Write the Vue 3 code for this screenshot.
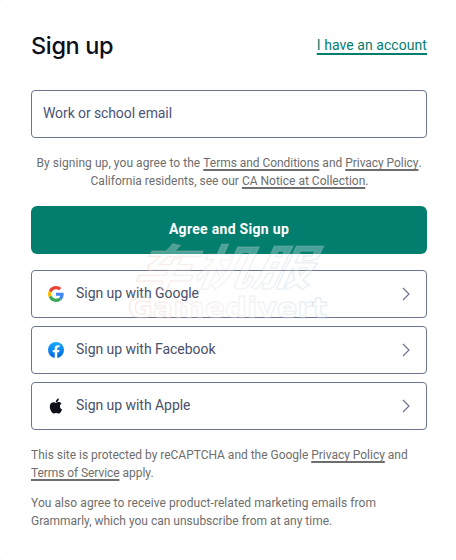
<template>
  <main class="signup">
    <header class="signup-head">
      <h1 class="title">Sign up</h1>
      <a class="account-link" href="#">I have an account</a>
    </header>

    <input class="email" type="email" placeholder="Work or school email" />

    <p class="terms">
      <span class="terms-intro">By signing up, you agree to the </span><a class="terms-link" href="#">Terms and Conditions</a> and <a class="terms-link" href="#">Privacy Policy</a>.<br />
      <span class="terms-region">California residents, see our </span><a href="#">CA Notice at Collection</a>.
    </p>

    <button class="submit" type="button">Agree and Sign up</button>

    <div class="providers">
      <button v-for="item in providers" :key="item.id" class="provider" type="button">
        <svg v-if="item.id === 'google'" class="provider-icon" viewBox="0 0 48 48">
          <path fill="#ea4335" d="M24 9.5c3.54 0 6.71 1.22 9.21 3.6l6.85-6.85C35.9 2.38 30.47 0 24 0 14.62 0 6.51 5.38 2.56 13.22l7.98 6.19C12.43 13.72 17.74 9.5 24 9.5z" />
          <path fill="#4285f4" d="M46.98 24.55c0-1.57-.15-3.09-.38-4.55H24v9.02h12.94c-.58 2.96-2.26 5.48-4.78 7.18l7.73 6c4.51-4.18 7.09-10.36 7.09-17.65z" />
          <path fill="#fbbc05" d="M10.53 28.59c-.48-1.45-.76-2.99-.76-4.59s.27-3.14.76-4.59l-7.98-6.19C.92 16.46 0 20.12 0 24c0 3.88.92 7.54 2.56 10.78l7.97-6.19z" />
          <path fill="#34a853" d="M24 48c6.48 0 11.93-2.13 15.89-5.81l-7.73-6c-2.15 1.45-4.92 2.3-8.16 2.3-6.26 0-11.57-4.22-13.47-9.91l-7.98 6.19C6.51 42.62 14.62 48 24 48z" />
        </svg>
        <svg v-else-if="item.id === 'facebook'" class="provider-icon" viewBox="0 0 24 24">
          <defs>
            <linearGradient id="fb-blue" x1="0" y1="0" x2="0" y2="1">
              <stop offset="0" stop-color="#18acfe" />
              <stop offset="1" stop-color="#0163e0" />
            </linearGradient>
          </defs>
          <circle cx="12" cy="12" r="12" fill="url(#fb-blue)" />
          <path fill="#fff" d="M16.67 15.47 17.2 12h-3.33V9.75c0-.95.47-1.87 1.96-1.87h1.51V4.92s-1.37-.23-2.69-.23c-2.74 0-4.53 1.66-4.53 4.67V12H7.08v3.47h3.04v8.38a12.1 12.1 0 0 0 3.75 0v-8.38z" />
        </svg>
        <svg v-else class="provider-icon" viewBox="0 0 24 24">
          <path
            fill="#0e101a"
            transform="translate(-2.2 -2.2) scale(1.19)"
            d="M16.9 12.6c0-2.4 1.9-3.6 2-3.7-1.1-1.6-2.8-1.8-3.4-1.9-1.5-.1-2.8.9-3.6.9-.7 0-1.9-.8-3.1-.8-1.6 0-3.1.9-3.9 2.4-1.7 2.9-.4 7.2 1.2 9.5.8 1.2 1.7 2.5 3 2.4 1.2 0 1.6-.8 3.1-.8 1.4 0 1.8.8 3.1.8 1.3 0 2.1-1.2 2.9-2.3.9-1.3 1.3-2.6 1.3-2.7 0 0-2.6-1-2.6-3.8zM14.5 5.5c.7-.8 1.1-1.9 1-3-1 0-2.1.6-2.8 1.4-.6.7-1.2 1.9-1 2.9 1.1.1 2.2-.5 2.8-1.3z"
          />
        </svg>
        <span class="provider-label">{{ item.label }}</span>
        <svg class="chevron" viewBox="0 0 8 14">
          <path d="M1 1l6 6-6 6" />
        </svg>
      </button>
    </div>

    <footer class="notes">
      <p>
        <span class="note-captcha">This site is protected by reCAPTCHA and the Google <a href="#">Privacy Policy</a> and</span><br />
        <a class="service-link" href="#">Terms of Service</a> apply.
      </p>
      <p>
        <span class="note-marketing">You also agree to receive product-related marketing emails from</span><br />
        Grammarly, which you can unsubscribe from at any time.
      </p>
    </footer>

    <svg class="watermark" viewBox="0 0 240 110" aria-hidden="true">
      <defs>
        <linearGradient id="mark-line" x1="0" x2="1">
          <stop offset="0" stop-color="#e3a896" />
          <stop offset="0.5" stop-color="#d4cdd2" />
          <stop offset="1" stop-color="#93b6d2" />
        </linearGradient>
      </defs>
      <g transform="translate(22 60) skewX(-25)">
        <text class="mark-cjk" x="0" y="0" textLength="178" lengthAdjust="spacingAndGlyphs">车机服</text>
      </g>
      <text class="mark-latin" x="18" y="93" textLength="199" lengthAdjust="spacingAndGlyphs">Gamedivert</text>
    </svg>
  </main>
</template>

<script setup>
const providers = [
  { id: 'google', label: 'Sign up with Google' },
  { id: 'facebook', label: 'Sign up with Facebook' },
  { id: 'apple', label: 'Sign up with Apple' },
]
</script>

<style>
body {
  background: #f3f4f6;
}
</style>

<style scoped>
.signup {
  position: relative;
  box-sizing: border-box;
  width: 456px;
  height: 560px;
  padding: 30px 29px 0 31px;
  background: #fff;
  border-radius: 3px 0 0 3px;
  font-family: Roboto, "Liberation Sans", sans-serif;
  color: #6d758d;
}

.signup-head {
  display: flex;
  justify-content: space-between;
  align-items: center;
  height: 32px;
}

.title {
  margin: 0;
  font-family: Inter, sans-serif;
  font-size: 23.5px;
  font-weight: 500;
  line-height: 32px;
  letter-spacing: -0.35px;
  color: #0e101a;
}

a {
  color: inherit;
  text-decoration: underline;
  text-decoration-thickness: 2px;
  text-decoration-skip-ink: none;
  text-underline-offset: 2px;
}

.account-link {
  padding-bottom: 2px;
  font-size: 14px;
  line-height: 20px;
  letter-spacing: 0.06px;
  text-underline-offset: 3px;
  color: #027e6f;
}

.email {
  display: block;
  box-sizing: border-box;
  width: 100%;
  height: 48px;
  margin-top: 28px;
  padding: 0 11px 2px;
  border: 1px solid #6d758d;
  border-radius: 4px;
  background: #fff;
  font: 14px Roboto, sans-serif;
  letter-spacing: -0.1px;
}

.email::placeholder {
  color: #4a5578;
}

.terms {
  margin: 16px 0 0;
  text-align: center;
  font-size: 12px;
  line-height: 18px;
  color: #6e6e6e;
  white-space: nowrap;
}

.terms-intro {
  letter-spacing: 0.06px;
}

.terms-link {
  letter-spacing: -0.05px;
}

.terms-region {
  padding-left: 1px;
}

.submit {
  display: block;
  width: 100%;
  height: 48px;
  margin-top: 16px;
  padding: 0 0 2px;
  border: 0;
  border-radius: 6px;
  background: #027e6f;
  font: 700 14px Roboto, sans-serif;
  letter-spacing: 0.3px;
  color: #fff;
}

.providers {
  display: flex;
  flex-direction: column;
  gap: 8px;
  margin-top: 16px;
}

.provider {
  display: flex;
  align-items: center;
  box-sizing: border-box;
  height: 48px;
  padding: 0 16px;
  border: 1px solid #6d758d;
  border-radius: 4px;
  background: #fff;
  font: 14px/20px Roboto, sans-serif;
  letter-spacing: -0.04px;
  color: #4a4f6a;
}

.provider-icon {
  width: 16px;
  height: 16px;
  margin-right: 12px;
}

.provider-label {
  flex: 1;
  padding-bottom: 2px;
  text-align: left;
}

.chevron {
  width: 8px;
  height: 14px;
  fill: none;
  stroke: #6d758d;
  stroke-width: 1.2;
}

.notes {
  margin-top: 16px;
  font-size: 12px;
  line-height: 18px;
  color: #6e6e6e;
  white-space: nowrap;
}

.notes p {
  margin: 0 0 12px;
}

.note-captcha {
  letter-spacing: -0.02px;
}

.service-link {
  letter-spacing: -0.08px;
}

.note-marketing {
  letter-spacing: 0.065px;
}

.watermark {
  position: absolute;
  left: 110px;
  top: 225px;
  width: 240px;
  height: 110px;
  pointer-events: none;
}

.mark-cjk,
.mark-latin {
  fill: #fff;
  fill-opacity: 0.28;
  stroke: url(#mark-line);
  stroke-opacity: 0.22;
  stroke-width: 1.4;
}

.mark-cjk {
  font: 700 48px "Noto Sans CJK SC", sans-serif;
}

.mark-latin {
  font: 700 28px "DejaVu Sans", sans-serif;
}
</style>
